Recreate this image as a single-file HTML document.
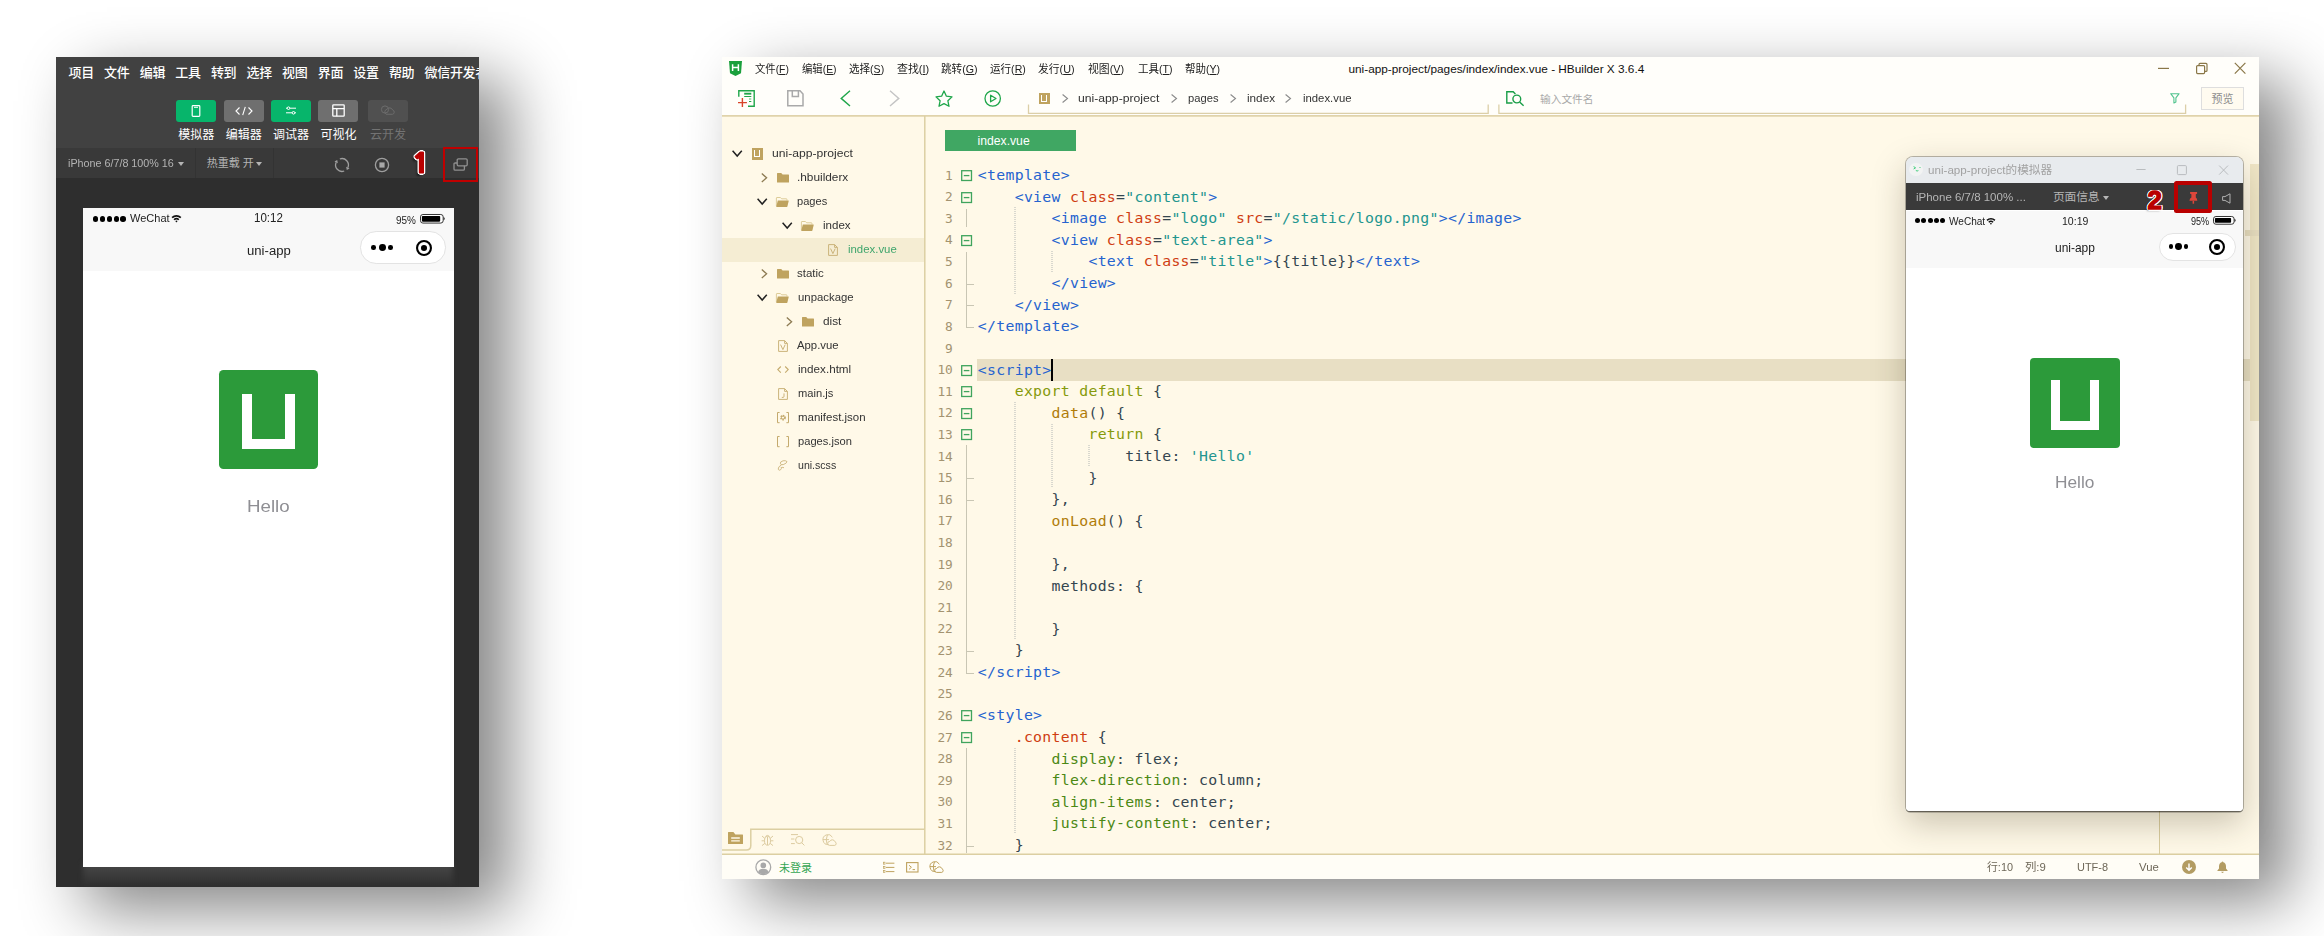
<!DOCTYPE html><html lang="zh-CN"><head><meta charset="utf-8"><title>uni-app</title><style>
*{box-sizing:border-box;margin:0;padding:0}
html,body{width:2324px;height:936px;overflow:hidden;background:#fff}
body{position:relative;font-family:"Liberation Sans","Noto Sans CJK SC",sans-serif;}
.a{position:absolute}
.t{position:absolute;white-space:pre;}
.win{position:absolute;box-shadow:30px 23px 60px 0 rgba(0,0,0,.48);}
svg{position:absolute;overflow:visible}
.code{position:absolute;white-space:pre;font-family:"DejaVu Sans Mono","Liberation Mono","Noto Sans CJK SC",monospace;font-size:14.8px;letter-spacing:0.31px;height:22px;line-height:22px;color:#34454f}
.ln{position:absolute;white-space:pre;font-family:"DejaVu Sans Mono","Liberation Mono","Noto Sans CJK SC",monospace;font-size:12.8px;height:22px;line-height:22px;color:#a39370;text-align:right;width:30px}
.tg{color:#2563cf} .at{color:#cf3d12} .st{color:#22958f} .kw{color:#869a0c} .fn{color:#b07c08} .pr{color:#4b8814} .sel{color:#cf3d12}
</style></head><body>
<div class="win" style="left:56px;top:57px;width:423px;height:830px;background:#2e2e2e;overflow:hidden;"></div>
<div class="a" style="left:56px;top:57px;width:423px;height:830px;overflow:hidden;">
<div class="a" style="left:0;top:0;width:423px;height:91px;background:#414141"></div>
<div class="a" style="left:0;top:91px;width:423px;height:30px;background:#393939"></div>
<div class="t " style="left:12.5px;top:6.5px;height:18px;line-height:18px;font-size:13px;color:#fff;font-weight:500;letter-spacing:-0.3px;">项目</div>
<div class="t " style="left:48.1px;top:6.5px;height:18px;line-height:18px;font-size:13px;color:#fff;font-weight:500;letter-spacing:-0.3px;">文件</div>
<div class="t " style="left:83.7px;top:6.5px;height:18px;line-height:18px;font-size:13px;color:#fff;font-weight:500;letter-spacing:-0.3px;">编辑</div>
<div class="t " style="left:119.3px;top:6.5px;height:18px;line-height:18px;font-size:13px;color:#fff;font-weight:500;letter-spacing:-0.3px;">工具</div>
<div class="t " style="left:154.9px;top:6.5px;height:18px;line-height:18px;font-size:13px;color:#fff;font-weight:500;letter-spacing:-0.3px;">转到</div>
<div class="t " style="left:190.5px;top:6.5px;height:18px;line-height:18px;font-size:13px;color:#fff;font-weight:500;letter-spacing:-0.3px;">选择</div>
<div class="t " style="left:226.1px;top:6.5px;height:18px;line-height:18px;font-size:13px;color:#fff;font-weight:500;letter-spacing:-0.3px;">视图</div>
<div class="t " style="left:261.7px;top:6.5px;height:18px;line-height:18px;font-size:13px;color:#fff;font-weight:500;letter-spacing:-0.3px;">界面</div>
<div class="t " style="left:297.3px;top:6.5px;height:18px;line-height:18px;font-size:13px;color:#fff;font-weight:500;letter-spacing:-0.3px;">设置</div>
<div class="t " style="left:332.9px;top:6.5px;height:18px;line-height:18px;font-size:13px;color:#fff;font-weight:500;letter-spacing:-0.3px;">帮助</div>
<div class="t " style="left:368.5px;top:6.5px;height:18px;line-height:18px;font-size:13px;color:#fff;font-weight:500;letter-spacing:-0.3px;">微信开发者工具</div>
<div class="a" style="left:120.2px;top:42.8px;width:40px;height:22px;border-radius:3px;background:#07b56b"></div>
<div class="t" style="left:110.2px;width:60px;text-align:center;top:69.6px;height:16px;line-height:16px;font-size:12px;color:#fff;">模拟器</div>
<div class="a" style="left:167.8px;top:42.8px;width:40px;height:22px;border-radius:3px;background:#6f6f6f"></div>
<div class="t" style="left:157.8px;width:60px;text-align:center;top:69.6px;height:16px;line-height:16px;font-size:12px;color:#fff;">编辑器</div>
<div class="a" style="left:215px;top:42.8px;width:40px;height:22px;border-radius:3px;background:#07b56b"></div>
<div class="t" style="left:205px;width:60px;text-align:center;top:69.6px;height:16px;line-height:16px;font-size:12px;color:#fff;">调试器</div>
<div class="a" style="left:262.4px;top:42.8px;width:40px;height:22px;border-radius:3px;background:#6f6f6f"></div>
<div class="t" style="left:252.39999999999998px;width:60px;text-align:center;top:69.6px;height:16px;line-height:16px;font-size:12px;color:#fff;">可视化</div>
<div class="a" style="left:312.1px;top:42.8px;width:40px;height:22px;border-radius:3px;background:#505050"></div>
<div class="t" style="left:302.1px;width:60px;text-align:center;top:69.6px;height:16px;line-height:16px;font-size:12px;color:#737373;">云开发</div>
<svg style="left:135.2px;top:47.8px" width="10" height="12" viewBox="0 0 10 12"><rect x="1.2" y="0.7" width="7.6" height="10.6" rx="0.8" fill="none" stroke="#fff" stroke-width="1.2"/><line x1="3" y1="2.3" x2="7" y2="2.3" stroke="#fff" stroke-width="1"/></svg>
<svg style="left:178.8px;top:48.8px" width="18" height="10" viewBox="0 0 18 10"><path d="M4.5 1.5 L1 5 L4.5 8.5 M13.5 1.5 L17 5 L13.5 8.5 M10.3 0.8 L7.7 9.2" fill="none" stroke="#fff" stroke-width="1.1"/></svg>
<svg style="left:230px;top:49.3px" width="10" height="9" viewBox="0 0 10 9"><path d="M0 2.2 H10 M0 6.8 H10" stroke="#fff" stroke-width="1"/><circle cx="2.5" cy="2.2" r="1.3" fill="#07b56b" stroke="#fff" stroke-width="1"/><circle cx="7.5" cy="6.8" r="1.3" fill="#07b56b" stroke="#fff" stroke-width="1"/></svg>
<svg style="left:275.9px;top:47.3px" width="13" height="13" viewBox="0 0 13 13"><rect x="0.8" y="0.8" width="11.4" height="11.4" rx="0.8" fill="none" stroke="#fff" stroke-width="1.3"/><path d="M0.8 4.6 H12.2 M4.8 4.6 V12.2" stroke="#fff" stroke-width="1.3"/></svg>
<svg style="left:324.1px;top:48.3px" width="16" height="11" viewBox="0 0 16 11"><circle cx="5" cy="4.5" r="3.6" fill="none" stroke="#6c6c6c" stroke-width="1"/><path d="M6 9.2 A2.8 2.8 0 0 1 7 4.2 A3.2 3.2 0 0 1 12.6 5 A2.2 2.2 0 0 1 12.4 9.3 Z" fill="none" stroke="#6c6c6c" stroke-width="1"/></svg>
<div class="t" style="left:11.9px;top:99.3px;height:14px;line-height:14px;font-size:11.7px;color:#b4b4b4;transform:scaleX(0.9197);transform-origin:0 50%;">iPhone 6/7/8 100% 16</div>
<div class="a" style="left:121.5px;top:105px;border-left:3px solid transparent;border-right:3px solid transparent;border-top:4px solid #b4b4b4"></div>
<div class="a" style="left:138.5px;top:91px;width:1px;height:30px;background:#333"></div>
<div class="a" style="left:216.5px;top:91px;width:1px;height:30px;background:#333"></div>
<div class="t " style="left:150.7px;top:99.3px;height:14px;line-height:14px;font-size:11px;color:#b4b4b4;">热重载 开</div>
<div class="a" style="left:199.5px;top:105px;border-left:3px solid transparent;border-right:3px solid transparent;border-top:4px solid #b4b4b4"></div>
<svg style="left:278.3px;top:99.9px" width="16" height="16" viewBox="0 0 16 16"><path d="M5.81 1.99 A6.4 6.4 0 0 1 13.75 10.81 M10.19 14.01 A6.4 6.4 0 0 1 2.25 5.19" fill="none" stroke="#9e9e9e" stroke-width="1.3"/><path d="M12.79 12.98 L15.58 11.38 L12.11 9.83 Z M3.21 3.02 L0.42 4.62 L3.89 6.17 Z" fill="#9e9e9e"/></svg>
<svg style="left:317.7px;top:99.9px" width="16" height="16" viewBox="0 0 16 16"><circle cx="8" cy="8" r="6.6" fill="none" stroke="#9e9e9e" stroke-width="1.3"/><rect x="5.4" y="5.4" width="5.2" height="5.2" fill="#a8a8a8"/></svg>
<svg style="left:397px;top:101px" width="15" height="13" viewBox="0 0 15 13"><rect x="4.2" y="0.8" width="10" height="7" rx="1.2" fill="none" stroke="#909090" stroke-width="1.3"/><path d="M4.2 5 H2.2 Q1 5 1 6.2 V11 Q1 12.2 2.2 12.2 H10.2 Q11.4 12.2 11.4 11 V7.8" fill="none" stroke="#909090" stroke-width="1.3"/></svg>
<div class="a" style="left:387px;top:89.7px;width:35.2px;height:35.4px;border:2px solid #c00000"></div>
<div class="t" style="left:355.8px;top:87.7px;height:38px;line-height:38px;font-size:27px;transform:scaleX(1.08);transform-origin:0 50%;font-weight:800;font-family:NanumGothic,'Liberation Sans',sans-serif;color:#b90000;-webkit-text-stroke:1.1px #b90000;text-shadow:1.60px 0.00px 0 #fff,-1.60px 0.00px 0 #fff,0.00px 1.60px 0 #fff,0.00px -1.60px 0 #fff,1.14px 1.14px 0 #fff,-1.14px 1.14px 0 #fff,1.14px -1.14px 0 #fff,-1.14px -1.14px 0 #fff,1.47px 0.61px 0 #fff,-1.47px 0.61px 0 #fff,1.47px -0.61px 0 #fff,-1.47px -0.61px 0 #fff,0.61px 1.47px 0 #fff,-0.61px 1.47px 0 #fff,0.61px -1.47px 0 #fff,-0.61px -1.47px 0 #fff,-2.5px 2.5px 2px rgba(0,0,0,.45);">1</div>
<div class="a" style="left:27px;top:806px;width:370px;height:24px;background:linear-gradient(#494949,#2e2e2e);filter:blur(2.5px)"></div>
<div class="a" style="left:27px;top:151px;width:370.5px;height:658.5px;background:#fff;overflow:hidden;border-radius:0"><div class="a" style="left:0;top:0;width:370.5px;height:63px;background:#f8f8f8"></div><div class="a" style="left:9.87px;top:8.04px;width:5.53px;height:5.53px;border-radius:50%;background:#000"></div><div class="a" style="left:16.76px;top:8.04px;width:5.53px;height:5.53px;border-radius:50%;background:#000"></div><div class="a" style="left:23.65px;top:8.04px;width:5.53px;height:5.53px;border-radius:50%;background:#000"></div><div class="a" style="left:30.54px;top:8.04px;width:5.53px;height:5.53px;border-radius:50%;background:#000"></div><div class="a" style="left:37.43px;top:8.04px;width:5.53px;height:5.53px;border-radius:50%;background:#000"></div><div class="t" style="left:46.8px;top:3.0px;height:14px;line-height:14px;font-size:11.65px;color:#222;transform:scaleX(0.9475);transform-origin:0 50%;">WeChat</div><svg style="left:88.0px;top:6.3px" width="10.9" height="8.9" viewBox="0 0 22 18"><path d="M1 6.2 A14.5 14.5 0 0 1 21 6.2 L18.6 8.8 A11 11 0 0 0 3.4 8.8 Z" fill="#111"/><path d="M5 10.4 A9 9 0 0 1 17 10.4 L14.7 12.9 A5.6 5.6 0 0 0 7.3 12.9 Z" fill="#111"/><path d="M8.6 14.2 A3.6 3.6 0 0 1 13.4 14.2 L11 17 Z" fill="#111"/></svg><div class="t" style="left:171.09px;top:1.9000000000000004px;height:16px;line-height:16px;font-size:12.83px;color:#222;transform:scaleX(0.9007);transform-origin:0 50%;">10:12</div><div class="t" style="left:312.9px;top:4.800000000000001px;height:14px;line-height:14px;font-size:11.45px;color:#222;transform:scaleX(0.8700);transform-origin:0 50%;">95%</div><svg style="left:337.34px;top:5.81px" width="26.69" height="9.57" viewBox="0 0 26.69 9.57"><rect x="0.5" y="0.5" width="22.69" height="8.57" rx="2.4" fill="#fff" stroke="#333" stroke-width="1"/><rect x="1.9" y="1.9" width="18.29" height="5.77" rx="0.8" fill="#000"/><path d="M23.69 3.09 Q25.79 4.79 23.69 6.49 Z" fill="#111"/></svg><div class="t" style="left:163.54px;top:32.8px;height:20px;line-height:20px;font-size:13.03px;color:#222;transform:scaleX(1.0082);transform-origin:0 50%;">uni-app</div><div class="a" style="left:277.4px;top:23.4px;width:85.3px;height:32.3px;border:1px solid #e3e3e3;border-radius:16.15px;background:#fff"></div><div class="a" style="left:288.3px;top:37.2px;width:4.6px;height:4.6px;border-radius:50%;background:#000"></div><div class="a" style="left:295.8px;top:36.1px;width:6.8px;height:6.8px;border-radius:50%;background:#000"></div><div class="a" style="left:305.2px;top:37.2px;width:4.6px;height:4.6px;border-radius:50%;background:#000"></div><svg style="left:332.38px;top:30.55px" width="18" height="18" viewBox="0 0 18 18"><circle cx="9" cy="9" r="6.95" fill="none" stroke="#000" stroke-width="2.1"/><circle cx="9" cy="9" r="3.05" fill="#000"/></svg><div class="a" style="left:136px;top:162px;width:99px;height:99px;border-radius:4.5px;background:#2c9a3a"></div><div class="a" style="left:158.9px;top:186.3px;width:53.1px;height:54.6px;border:10.0px solid #fff;border-top:none"></div><div class="t" style="left:164.1px;top:286.1px;height:24px;line-height:24px;font-size:17.4px;color:#8f8f94;transform:scaleX(1.0769);transform-origin:0 50%;">Hello</div></div>
</div>
<div class="win" style="left:722px;top:57px;width:1537px;height:822px;background:#fffae8;"></div>
<div class="a" id="hb" style="left:722px;top:57px;width:1537px;height:822px;overflow:hidden;background:#fff9e8">
<div class="a" style="left:0;top:0;width:1537px;height:58px;background:#fffefa"></div>
<svg style="left:0;top:0" width="1537" height="822"><path d="M0 58.8 H1537" stroke="#e0d3ab" stroke-width="1.8"/></svg>
<svg style="left:6.8px;top:4px" width="13" height="15" viewBox="0 0 13 15"><path d="M0 0 H13 L12 12.3 L6.5 15 L1 12.3 Z" fill="#1aa03c"/><path d="M3.6 3.2 V10 M9.4 3.2 V10 M3.6 6.6 H9.4" stroke="#fff" stroke-width="1.5" fill="none"/></svg>
<div class="t" style="left:33.4px;top:4.0px;height:16px;line-height:16px;font-size:11.2px;color:#222;transform:scaleX(0.9237);transform-origin:0 50%;">文件(<u>F</u>)</div>
<div class="t" style="left:79.8px;top:4.0px;height:16px;line-height:16px;font-size:11.2px;color:#222;transform:scaleX(0.9269);transform-origin:0 50%;">编辑(<u>E</u>)</div>
<div class="t" style="left:127.1px;top:4.0px;height:16px;line-height:16px;font-size:11.2px;color:#222;transform:scaleX(0.9429);transform-origin:0 50%;">选择(<u>S</u>)</div>
<div class="t" style="left:174.7px;top:4.0px;height:16px;line-height:16px;font-size:11.2px;color:#222;transform:scaleX(0.9766);transform-origin:0 50%;">查找(<u>I</u>)</div>
<div class="t" style="left:219.2px;top:4.0px;height:16px;line-height:16px;font-size:11.2px;color:#222;transform:scaleX(0.9489);transform-origin:0 50%;">跳转(<u>G</u>)</div>
<div class="t" style="left:268px;top:4.0px;height:16px;line-height:16px;font-size:11.2px;color:#222;transform:scaleX(0.9434);transform-origin:0 50%;">运行(<u>R</u>)</div>
<div class="t" style="left:316px;top:4.0px;height:16px;line-height:16px;font-size:11.2px;color:#222;transform:scaleX(0.9645);transform-origin:0 50%;">发行(<u>U</u>)</div>
<div class="t" style="left:365.8px;top:4.0px;height:16px;line-height:16px;font-size:11.2px;color:#222;transform:scaleX(0.9697);transform-origin:0 50%;">视图(<u>V</u>)</div>
<div class="t" style="left:415.5px;top:4.0px;height:16px;line-height:16px;font-size:11.2px;color:#222;transform:scaleX(0.9428);transform-origin:0 50%;">工具(<u>T</u>)</div>
<div class="t" style="left:463px;top:4.0px;height:16px;line-height:16px;font-size:11.2px;color:#222;transform:scaleX(0.9376);transform-origin:0 50%;">帮助(<u>Y</u>)</div>
<div class="t " style="left:626.5px;top:4.0px;height:16px;line-height:16px;font-size:11.8px;color:#111;">uni-app-project/pages/index/index.vue - HBuilder X 3.6.4</div>
<svg style="left:1436px;top:5px" width="90" height="13" viewBox="0 0 90 13"><path d="M0 6.4 H11" stroke="#8a7748" stroke-width="1.2"/><rect x="38.6" y="3.6" width="8" height="8" rx="1" fill="none" stroke="#8a7748" stroke-width="1.2"/><path d="M41 3.6 V2.4 Q41 1.4 42 1.4 H48 Q49 1.4 49 2.4 V8.4 Q49 9.4 48 9.4 H46.6" fill="none" stroke="#8a7748" stroke-width="1.2"/><path d="M76.8 0.8 L87.4 11.6 M87.4 0.8 L76.8 11.6" stroke="#8a7748" stroke-width="1.2"/></svg>
<svg style="left:16px;top:33px" width="18" height="18" viewBox="0 0 18 18"><path d="M0.8 6.8 V0.8 H16.2 V16.2 H10" fill="none" stroke="#1fa64a" stroke-width="1.4"/><path d="M6.2 3.7 H13.3" stroke="#1fa64a" stroke-width="1.9"/><path d="M6.2 6.5 H13.3 M11 11.5 H13.3" stroke="#1fa64a" stroke-width="1"/><path d="M11 9 H13.3" stroke="#7cc894" stroke-width="1.3"/><path d="M0 12.6 H8.9 M4.4 8.1 V16.9" stroke="#d8432a" stroke-width="1.4"/></svg>
<svg style="left:65.4px;top:33.2px" width="17" height="17" viewBox="0 0 17 17"><path d="M0.8 0.8 H13 L16 4 V15.8 H0.8 Z" fill="none" stroke="#a9a9a9" stroke-width="1.5"/><path d="M5.3 0.8 V6.4 H11.4 V0.8" fill="none" stroke="#a9a9a9" stroke-width="1.5"/></svg>
<svg style="left:118px;top:33px" width="11" height="17" viewBox="0 0 11 17"><path d="M10 0.8 L1.2 8.4 L10 16" fill="none" stroke="#1fa64a" stroke-width="1.4"/></svg>
<svg style="left:167px;top:33px" width="11" height="17" viewBox="0 0 11 17"><path d="M1 0.8 L9.8 8.4 L1 16" fill="none" stroke="#c4c4c4" stroke-width="1.4"/></svg>
<svg style="left:213px;top:32.5px" width="18" height="17" viewBox="0 0 18 17"><path d="M9 1 L11.4 6.2 L17 6.9 L12.9 10.8 L14 16.3 L9 13.6 L4 16.3 L5.1 10.8 L1 6.9 L6.6 6.2 Z" fill="none" stroke="#1fa64a" stroke-width="1.3" stroke-linejoin="round"/></svg>
<svg style="left:262px;top:33px" width="18" height="18" viewBox="0 0 18 18"><circle cx="8.7" cy="8.5" r="7.7" fill="none" stroke="#1fa64a" stroke-width="1.3"/><path d="M6.6 5.2 L12 8.5 L6.6 11.8 Z" fill="none" stroke="#1fa64a" stroke-width="1.3" stroke-linejoin="round"/></svg>
<svg style="left:0;top:0" width="1537" height="822"><path d="M306.5 47.4 V56.4 H766.2 V47.4 M776.9 47.4 V56.4 H1463.6 V47.4" fill="none" stroke="#dccfa8" stroke-width="1.3"/></svg>
<div class="a" style="left:316.5px;top:35.6px;width:11.8px;height:11.8px;background:#bfa35f"></div>
<div class="a" style="left:319.4px;top:38px;width:6px;height:6.6px;border:1.4px solid #fff;border-top:none"></div>
<svg style="left:339.7px;top:37.3px" width="6.5" height="9" viewBox="0 0 6.5 9"><path d="M0.6 0.5 L5.5 4.5 L0.6 8.5" fill="none" stroke="#8a8a8a" stroke-width="1.1"/></svg>
<svg style="left:448.7px;top:37.3px" width="6.5" height="9" viewBox="0 0 6.5 9"><path d="M0.6 0.5 L5.5 4.5 L0.6 8.5" fill="none" stroke="#8a8a8a" stroke-width="1.1"/></svg>
<svg style="left:507.6px;top:37.3px" width="6.5" height="9" viewBox="0 0 6.5 9"><path d="M0.6 0.5 L5.5 4.5 L0.6 8.5" fill="none" stroke="#8a8a8a" stroke-width="1.1"/></svg>
<svg style="left:563.2px;top:37.3px" width="6.5" height="9" viewBox="0 0 6.5 9"><path d="M0.6 0.5 L5.5 4.5 L0.6 8.5" fill="none" stroke="#8a8a8a" stroke-width="1.1"/></svg>
<div class="t" style="left:356.2px;top:33.3px;height:16px;line-height:16px;font-size:11.8px;color:#333;transform:scaleX(1.0329);transform-origin:0 50%;">uni-app-project</div>
<div class="t" style="left:465.5px;top:33.3px;height:16px;line-height:16px;font-size:11.8px;color:#333;transform:scaleX(0.9487);transform-origin:0 50%;">pages</div>
<div class="t" style="left:524.5px;top:33.3px;height:16px;line-height:16px;font-size:11.8px;color:#333;transform:scaleX(0.9926);transform-origin:0 50%;">index</div>
<div class="t" style="left:580.9px;top:33.3px;height:16px;line-height:16px;font-size:11.8px;color:#333;transform:scaleX(0.9601);transform-origin:0 50%;">index.vue</div>
<svg style="left:783.8px;top:34px" width="19" height="16" viewBox="0 0 19 16"><path d="M6.5 12 H0.8 V0.8 H7.2 L9.4 3" fill="none" stroke="#1a9e48" stroke-width="1.4"/><circle cx="10.8" cy="8" r="3.9" fill="none" stroke="#1a9e48" stroke-width="1.4"/><path d="M13.6 10.9 L17.6 14.8" stroke="#1a9e48" stroke-width="1.4"/></svg>
<div class="t " style="left:818px;top:33.5px;height:16px;line-height:16px;font-size:10.7px;color:#a9a9a9;">输入文件名</div>
<svg style="left:1448px;top:36.2px" width="10" height="11" viewBox="0 0 10 11"><path d="M0.7 0.7 H9.1 L5.9 4.9 V9 L3.9 10 V4.9 Z" fill="none" stroke="#52c48e" stroke-width="1.1" stroke-linejoin="round"/></svg>
<div class="a" style="left:1479.3px;top:29.5px;width:42.4px;height:23.4px;border:1px solid #dedede;background:#fffbf0"></div>
<div class="t " style="left:1489.6px;top:33.5px;height:16px;line-height:16px;font-size:11px;color:#8c8c8c;">预览</div>
<svg style="left:0;top:0" width="1537" height="822"><path d="M202.8 59 V797.3 M28.8 772.2 H202.8 M0 792.9 H24.3 Q28.8 792.9 28.8 788.4 V771.5" fill="none" stroke="#dccfa2" stroke-width="1.5"/></svg>
<div class="a" style="left:0;top:181px;width:202.3px;height:23.6px;background:#f5edd3"></div>
<div class="t" style="left:50px;top:88.1px;height:16px;line-height:16px;font-size:11.8px;color:#333;transform:scaleX(1.0291);transform-origin:0 50%;">uni-app-project</div>
<div class="t" style="left:75px;top:112.1px;height:16px;line-height:16px;font-size:11.8px;color:#333;transform:scaleX(1.0026);transform-origin:0 50%;">.hbuilderx</div>
<div class="t" style="left:75.4px;top:136.1px;height:16px;line-height:16px;font-size:11.8px;color:#333;transform:scaleX(0.9393);transform-origin:0 50%;">pages</div>
<div class="t" style="left:100.6px;top:160.1px;height:16px;line-height:16px;font-size:11.8px;color:#333;transform:scaleX(0.9784);transform-origin:0 50%;">index</div>
<div class="t" style="left:125.6px;top:184.1px;height:16px;line-height:16px;font-size:11.8px;color:#3fa56c;transform:scaleX(0.9661);transform-origin:0 50%;">index.vue</div>
<div class="t" style="left:75.4px;top:208.1px;height:16px;line-height:16px;font-size:11.8px;color:#333;transform:scaleX(0.9731);transform-origin:0 50%;">static</div>
<div class="t" style="left:75.6px;top:232.1px;height:16px;line-height:16px;font-size:11.8px;color:#333;transform:scaleX(0.9630);transform-origin:0 50%;">unpackage</div>
<div class="t" style="left:100.6px;top:256.1px;height:16px;line-height:16px;font-size:11.8px;color:#333;transform:scaleX(1.0020);transform-origin:0 50%;">dist</div>
<div class="t" style="left:75.2px;top:280.1px;height:16px;line-height:16px;font-size:11.8px;color:#333;transform:scaleX(0.9607);transform-origin:0 50%;">App.vue</div>
<div class="t" style="left:75.6px;top:304.1px;height:16px;line-height:16px;font-size:11.8px;color:#333;transform:scaleX(0.9892);transform-origin:0 50%;">index.html</div>
<div class="t" style="left:75.6px;top:328.1px;height:16px;line-height:16px;font-size:11.8px;color:#333;transform:scaleX(0.9444);transform-origin:0 50%;">main.js</div>
<div class="t" style="left:75.6px;top:352.1px;height:16px;line-height:16px;font-size:11.8px;color:#333;transform:scaleX(0.9724);transform-origin:0 50%;">manifest.json</div>
<div class="t" style="left:75.6px;top:376.1px;height:16px;line-height:16px;font-size:11.8px;color:#333;transform:scaleX(0.9444);transform-origin:0 50%;">pages.json</div>
<div class="t" style="left:75.6px;top:400.1px;height:16px;line-height:16px;font-size:11.8px;color:#333;transform:scaleX(0.8962);transform-origin:0 50%;">uni.scss</div>
<svg style="left:10px;top:93.1px" width="10.4" height="7" viewBox="0 0 10.4 7"><path d="M0.6 0.8 L5.2 6 L9.8 0.8" fill="none" stroke="#222" stroke-width="1.5"/></svg>
<div class="a" style="left:29.5px;top:91px;width:11.8px;height:11.6px;background:#bfa35f"></div>
<div class="a" style="left:32.4px;top:93.4px;width:6px;height:6.6px;border:1.4px solid #fff;border-top:none"></div>
<svg style="left:38.5px;top:115.8px" width="6.4" height="9.6" viewBox="0 0 6.4 9.6"><path d="M0.8 0.6 L5.6 4.8 L0.8 9" fill="none" stroke="#8d7b52" stroke-width="1.3"/></svg>
<svg style="left:54.9px;top:115.8px" width="12" height="9.6" viewBox="0 0 12 9.6"><path d="M0 0.4 Q0 0 0.4 0 H4.2 L5.6 1.5 H11.6 Q12 1.5 12 1.9 V9.2 Q12 9.6 11.6 9.6 H0.4 Q0 9.6 0 9.2 Z" fill="#bfa35f"/></svg>
<svg style="left:34.9px;top:141.1px" width="10.4" height="7" viewBox="0 0 10.4 7"><path d="M0.6 0.8 L5.2 6 L9.8 0.8" fill="none" stroke="#222" stroke-width="1.5"/></svg>
<svg style="left:53.8px;top:139.5px" width="12.8" height="10" viewBox="0 0 12.8 10"><path d="M0.4 9 V1 Q0.4 0.5 0.9 0.5 H4.4 L5.6 1.8 H10.4 Q10.9 1.8 10.9 2.3 V3.4" fill="none" stroke="#d9c68f" stroke-width="0.9"/><path d="M1.8 3.6 H12.4 Q12.9 3.6 12.7 4.1 L11.4 9.6 Q11.3 10 10.9 10 H0.6 Q0.1 10 0.3 9.5 Z" fill="#bfa35f"/></svg>
<svg style="left:60px;top:165.1px" width="10.4" height="7" viewBox="0 0 10.4 7"><path d="M0.6 0.8 L5.2 6 L9.8 0.8" fill="none" stroke="#222" stroke-width="1.5"/></svg>
<svg style="left:78.8px;top:163.5px" width="12.8" height="10" viewBox="0 0 12.8 10"><path d="M0.4 9 V1 Q0.4 0.5 0.9 0.5 H4.4 L5.6 1.8 H10.4 Q10.9 1.8 10.9 2.3 V3.4" fill="none" stroke="#d9c68f" stroke-width="0.9"/><path d="M1.8 3.6 H12.4 Q12.9 3.6 12.7 4.1 L11.4 9.6 Q11.3 10 10.9 10 H0.6 Q0.1 10 0.3 9.5 Z" fill="#bfa35f"/></svg>
<svg style="left:106px;top:186.8px" width="10" height="12" viewBox="0 0 10 12"><path d="M0.6 0.6 H6.6 L9.4 3.4 V11.4 H0.6 Z M6.6 0.6 V3.4 H9.4" fill="none" stroke="#cbb37a" stroke-width="1"/><path d="M2.6 4.6 L4.9 9.6 L7.2 4.6" fill="none" stroke="#cbb37a" stroke-width="1"/></svg>
<svg style="left:38.5px;top:211.8px" width="6.4" height="9.6" viewBox="0 0 6.4 9.6"><path d="M0.8 0.6 L5.6 4.8 L0.8 9" fill="none" stroke="#8d7b52" stroke-width="1.3"/></svg>
<svg style="left:54.9px;top:211.8px" width="12" height="9.6" viewBox="0 0 12 9.6"><path d="M0 0.4 Q0 0 0.4 0 H4.2 L5.6 1.5 H11.6 Q12 1.5 12 1.9 V9.2 Q12 9.6 11.6 9.6 H0.4 Q0 9.6 0 9.2 Z" fill="#bfa35f"/></svg>
<svg style="left:34.9px;top:237.1px" width="10.4" height="7" viewBox="0 0 10.4 7"><path d="M0.6 0.8 L5.2 6 L9.8 0.8" fill="none" stroke="#222" stroke-width="1.5"/></svg>
<svg style="left:53.8px;top:235.5px" width="12.8" height="10" viewBox="0 0 12.8 10"><path d="M0.4 9 V1 Q0.4 0.5 0.9 0.5 H4.4 L5.6 1.8 H10.4 Q10.9 1.8 10.9 2.3 V3.4" fill="none" stroke="#d9c68f" stroke-width="0.9"/><path d="M1.8 3.6 H12.4 Q12.9 3.6 12.7 4.1 L11.4 9.6 Q11.3 10 10.9 10 H0.6 Q0.1 10 0.3 9.5 Z" fill="#bfa35f"/></svg>
<svg style="left:63.7px;top:259.8px" width="6.4" height="9.6" viewBox="0 0 6.4 9.6"><path d="M0.8 0.6 L5.6 4.8 L0.8 9" fill="none" stroke="#8d7b52" stroke-width="1.3"/></svg>
<svg style="left:79.7px;top:259.8px" width="12" height="9.6" viewBox="0 0 12 9.6"><path d="M0 0.4 Q0 0 0.4 0 H4.2 L5.6 1.5 H11.6 Q12 1.5 12 1.9 V9.2 Q12 9.6 11.6 9.6 H0.4 Q0 9.6 0 9.2 Z" fill="#bfa35f"/></svg>
<svg style="left:55.8px;top:282.8px" width="10" height="12" viewBox="0 0 10 12"><path d="M0.6 0.6 H6.6 L9.4 3.4 V11.4 H0.6 Z M6.6 0.6 V3.4 H9.4" fill="none" stroke="#cbb37a" stroke-width="1"/><path d="M2.6 4.6 L4.9 9.6 L7.2 4.6" fill="none" stroke="#cbb37a" stroke-width="1"/></svg>
<svg style="left:54.9px;top:309.0px" width="12" height="7.2" viewBox="0 0 12 7.2"><path d="M3.8 0.5 L0.8 3.6 L3.8 6.7 M8.2 0.5 L11.2 3.6 L8.2 6.7" fill="none" stroke="#c4aa6c" stroke-width="1.1"/></svg>
<svg style="left:55.8px;top:330.8px" width="10" height="12" viewBox="0 0 10 12"><path d="M0.6 0.6 H6.6 L9.4 3.4 V11.4 H0.6 Z M6.6 0.6 V3.4 H9.4" fill="none" stroke="#cbb37a" stroke-width="1"/><path d="M6 5.4 V8.4 Q6 9.4 5 9.4 H3.8" fill="none" stroke="#cbb37a" stroke-width="1"/></svg>
<svg style="left:54.9px;top:355.0px" width="12" height="11.2" viewBox="0 0 12 11.2"><path d="M2.6 0.5 H0.5 V10.7 H2.6 M9.4 0.5 H11.5 V10.7 H9.4" fill="none" stroke="#c4aa6c" stroke-width="1"/><circle cx="6" cy="5.6" r="2.1" fill="none" stroke="#c4aa6c" stroke-width="1.6" stroke-dasharray="1.3 0.9"/><circle cx="6" cy="5.6" r="1.6" fill="none" stroke="#c4aa6c" stroke-width="1"/></svg>
<svg style="left:54.9px;top:379.0px" width="12" height="11.2" viewBox="0 0 12 11.2"><path d="M2.6 0.5 H0.5 V10.7 H2.6 M9.4 0.5 H11.5 V10.7 H9.4" fill="none" stroke="#c4aa6c" stroke-width="1"/></svg>
<svg style="left:55px;top:403.2px" width="11" height="11" viewBox="0 0 11 11"><path d="M10 1.6 Q8.6 0.2 6 0.8 Q2.6 1.8 3.4 3.8 Q4 5 6.2 4.6 Q9.6 3.6 10 1.6 M4.6 4.6 Q2.2 6 1.4 8 Q0.8 10 2.4 10.2 Q4 10 4.4 8.4 Q4.6 7.4 3.6 6.8 M4.4 7.6 Q6 7 7 7.8" fill="none" stroke="#cbb37a" stroke-width="0.9"/></svg>
<svg style="left:6.4px;top:775px" width="15" height="12" viewBox="0 0 15 12"><path d="M0 0.5 Q0 0 0.5 0 H5.4 L7.4 2.4 H14.5 Q15 2.4 15 2.9 V11.5 Q15 12 14.5 12 H0.5 Q0 12 0 11.5 Z" fill="#bfa35f"/><path d="M3.2 6 H11.8 M3.2 8.9 H11.8" stroke="#fff9e8" stroke-width="1.3"/></svg>
<svg style="left:38.5px;top:776.5px" width="13" height="12" viewBox="0 0 13 12"><ellipse cx="6.5" cy="6.8" rx="3" ry="4.4" fill="none" stroke="#dccb9f" stroke-width="1"/><path d="M6.5 3 V11 M4.6 2.8 A2 2 0 0 1 8.4 2.8 M0.6 6.8 H3.4 M9.6 6.8 H12.4 M1 2 L3.8 4.4 M12 2 L9.2 4.4 M1 11.6 L3.8 9.4 M12 11.6 L9.2 9.4" fill="none" stroke="#dccb9f" stroke-width="1"/></svg>
<svg style="left:69.2px;top:777px" width="14" height="12" viewBox="0 0 14 12"><path d="M0 0.6 H7 M0 5 H3.4 M0 9.6 H3.8" stroke="#dccb9f" stroke-width="1"/><circle cx="8.2" cy="6" r="3.6" fill="none" stroke="#dccb9f" stroke-width="1"/><path d="M10.8 8.8 L13.4 11.4" stroke="#dccb9f" stroke-width="1"/></svg>
<svg style="left:100px;top:776.5px" width="15" height="12" viewBox="0 0 15 12"><path d="M6.4 10.6 A5 5 0 1 1 10.4 3.2" fill="none" stroke="#dccb9f" stroke-width="1"/><path d="M0.8 5.6 H7 M5.4 0.8 Q3.4 5.6 5 10.2" fill="none" stroke="#dccb9f" stroke-width="1"/><path d="M7.6 11.4 A2 2 0 0 1 7.8 7.4 A2.8 2.8 0 0 1 13 7.8 A1.9 1.9 0 0 1 12.8 11.4 Z" fill="none" stroke="#dccb9f" stroke-width="1"/></svg>
<div class="a" style="left:0;top:797px;width:1537px;height:25px;background:#fffdf6;"></div><svg style="left:0;top:0" width="1537" height="822"><path d="M0 797.3 H1537" stroke="#dccfa2" stroke-width="1.5"/></svg>
<svg style="left:33px;top:801.6px" width="17" height="17" viewBox="0 0 17 17"><defs><clipPath id="cpa"><circle cx="8.3" cy="8.3" r="7"/></clipPath></defs><circle cx="8.3" cy="8.3" r="7.4" fill="none" stroke="#a9a9a9" stroke-width="1.3"/><g clip-path="url(#cpa)" fill="#a9a9a9"><circle cx="8.3" cy="6.4" r="2.8"/><path d="M2.6 16 Q2.8 10.6 6.4 10 H10.2 Q13.8 10.6 14 16 Z"/></g></svg>
<div class="t " style="left:57px;top:802.9px;height:16px;line-height:16px;font-size:11px;color:#35a653;">未登录</div>
<svg style="left:160.8px;top:804.8px" width="12" height="11" viewBox="0 0 12 11"><path d="M3 1.2 H11.4 M3 5.4 H11.4 M3 9.6 H11.4" stroke="#bfa35f" stroke-width="1"/><rect x="0.4" y="0.2" width="1.6" height="2" fill="none" stroke="#bfa35f" stroke-width="0.7"/><rect x="0.4" y="4.4" width="1.6" height="2" fill="none" stroke="#bfa35f" stroke-width="0.7"/><rect x="0.4" y="8.6" width="1.6" height="2" fill="none" stroke="#bfa35f" stroke-width="0.7"/></svg>
<svg style="left:184px;top:804.8px" width="13" height="11" viewBox="0 0 13 11"><rect x="0.6" y="0.6" width="11.4" height="9.4" fill="none" stroke="#bfa35f" stroke-width="1.1"/><path d="M3 3.2 L5.4 5.3 L3 7.4 M6.6 7.6 H9" fill="none" stroke="#bfa35f" stroke-width="1"/></svg>
<svg style="left:207px;top:804.2px" width="15" height="12" viewBox="0 0 15 12"><path d="M6.4 10.6 A5 5 0 1 1 10.4 3.2" fill="none" stroke="#bfa35f" stroke-width="1"/><path d="M0.8 5.6 H7 M5.4 0.8 Q3.4 5.6 5 10.2" fill="none" stroke="#bfa35f" stroke-width="1"/><path d="M7.6 11.4 A2 2 0 0 1 7.8 7.4 A2.8 2.8 0 0 1 13 7.8 A1.9 1.9 0 0 1 12.8 11.4 Z" fill="none" stroke="#bfa35f" stroke-width="1"/></svg>
<div class="t" style="left:1265px;top:802.2px;height:16px;line-height:16px;font-size:11.6px;color:#6e6758;transform:scaleX(0.9378);transform-origin:0 50%;">行:10</div>
<div class="t" style="left:1302.7px;top:802.2px;height:16px;line-height:16px;font-size:11.6px;color:#6e6758;transform:scaleX(0.9777);transform-origin:0 50%;">列:9</div>
<div class="t" style="left:1355px;top:802.2px;height:16px;line-height:16px;font-size:11.6px;color:#6e6758;transform:scaleX(0.9433);transform-origin:0 50%;">UTF-8</div>
<div class="t" style="left:1417.4px;top:802.2px;height:16px;line-height:16px;font-size:11.6px;color:#6e6758;transform:scaleX(0.9787);transform-origin:0 50%;">Vue</div>
<svg style="left:1459.6px;top:803px" width="14" height="14" viewBox="0 0 14 14"><circle cx="7" cy="7" r="7" fill="#b39c62"/><path d="M7 3.4 V10 M4.2 7.4 L7 10.2 L9.8 7.4" fill="none" stroke="#fff" stroke-width="1.4"/></svg>
<svg style="left:1495px;top:804px" width="11" height="12" viewBox="0 0 11 12"><path d="M5.5 0.4 Q6.3 0.4 6.3 1.3 Q9 2.2 9 5.4 V7.6 L10.6 9.4 V10 H0.4 V9.4 L2 7.6 V5.4 Q2 2.2 4.7 1.3 Q4.7 0.4 5.5 0.4 Z" fill="#b39c62"/><path d="M4.2 10.8 H6.8 Q6.6 11.9 5.5 11.9 Q4.4 11.9 4.2 10.8 Z" fill="#b39c62"/></svg>
<div class="a" style="left:222.6px;top:72.8px;width:131px;height:21.4px;background:#40a763"></div>
<div class="t" style="left:222.6px;top:75.5px;width:118px;text-align:center;height:16px;line-height:16px;font-size:12.2px;color:#fff">index.vue</div>
<div class="a" style="left:1528px;top:107.3px;width:9px;height:689.3px;background:transparent"></div>
<div class="a" style="left:1528px;top:107.3px;width:9px;height:256.7px;background:#f1e7c7"></div>
<div class="a" style="left:1523px;top:172.5px;width:14px;height:6.5px;background:#e9dfc2"></div>
<div class="a" style="left:1436.6px;top:106px;width:1px;height:690.6px;background:#d9cc9f"></div>
<div class="a" style="left:255px;top:302.2px;width:1273px;height:21.5px;background:#e8dfc4"></div>
<div class="ln" style="left:200.8px;top:107.60px">1</div>
<div class="code" style="left:255.8px;top:107.00px"><span class="tg">&lt;template&gt;</span></div>
<div class="ln" style="left:200.8px;top:129.21px">2</div>
<div class="code" style="left:255.8px;top:128.61px">    <span class="tg">&lt;view</span> <span class="at">class</span>=<span class="st">"content"</span><span class="tg">&gt;</span></div>
<div class="ln" style="left:200.8px;top:150.83px">3</div>
<div class="code" style="left:255.8px;top:150.23px">        <span class="tg">&lt;image</span> <span class="at">class</span>=<span class="st">"logo"</span> <span class="at">src</span>=<span class="st">"/static/logo.png"</span><span class="tg">&gt;&lt;/image&gt;</span></div>
<div class="ln" style="left:200.8px;top:172.44px">4</div>
<div class="code" style="left:255.8px;top:171.84px">        <span class="tg">&lt;view</span> <span class="at">class</span>=<span class="st">"text-area"</span><span class="tg">&gt;</span></div>
<div class="ln" style="left:200.8px;top:194.05px">5</div>
<div class="code" style="left:255.8px;top:193.45px">            <span class="tg">&lt;text</span> <span class="at">class</span>=<span class="st">"title"</span><span class="tg">&gt;</span>{{title}}<span class="tg">&lt;/text&gt;</span></div>
<div class="ln" style="left:200.8px;top:215.67px">6</div>
<div class="code" style="left:255.8px;top:215.06px">        <span class="tg">&lt;/view&gt;</span></div>
<div class="ln" style="left:200.8px;top:237.28px">7</div>
<div class="code" style="left:255.8px;top:236.68px">    <span class="tg">&lt;/view&gt;</span></div>
<div class="ln" style="left:200.8px;top:258.89px">8</div>
<div class="code" style="left:255.8px;top:258.29px"><span class="tg">&lt;/template&gt;</span></div>
<div class="ln" style="left:200.8px;top:280.50px">9</div>
<div class="ln" style="left:200.8px;top:302.12px">10</div>
<div class="code" style="left:255.8px;top:301.52px"><span class="tg">&lt;script&gt;</span></div>
<div class="ln" style="left:200.8px;top:323.73px">11</div>
<div class="code" style="left:255.8px;top:323.13px">    <span class="kw">export default</span> {</div>
<div class="ln" style="left:200.8px;top:345.34px">12</div>
<div class="code" style="left:255.8px;top:344.74px">        <span class="fn">data</span>() {</div>
<div class="ln" style="left:200.8px;top:366.96px">13</div>
<div class="code" style="left:255.8px;top:366.36px">            <span class="kw">return</span> {</div>
<div class="ln" style="left:200.8px;top:388.57px">14</div>
<div class="code" style="left:255.8px;top:387.97px">                title: <span class="st">'Hello'</span></div>
<div class="ln" style="left:200.8px;top:410.18px">15</div>
<div class="code" style="left:255.8px;top:409.58px">            }</div>
<div class="ln" style="left:200.8px;top:431.80px">16</div>
<div class="code" style="left:255.8px;top:431.19px">        },</div>
<div class="ln" style="left:200.8px;top:453.41px">17</div>
<div class="code" style="left:255.8px;top:452.81px">        <span class="fn">onLoad</span>() {</div>
<div class="ln" style="left:200.8px;top:475.02px">18</div>
<div class="ln" style="left:200.8px;top:496.63px">19</div>
<div class="code" style="left:255.8px;top:496.03px">        },</div>
<div class="ln" style="left:200.8px;top:518.25px">20</div>
<div class="code" style="left:255.8px;top:517.65px">        methods: {</div>
<div class="ln" style="left:200.8px;top:539.86px">21</div>
<div class="ln" style="left:200.8px;top:561.47px">22</div>
<div class="code" style="left:255.8px;top:560.87px">        }</div>
<div class="ln" style="left:200.8px;top:583.09px">23</div>
<div class="code" style="left:255.8px;top:582.49px">    }</div>
<div class="ln" style="left:200.8px;top:604.70px">24</div>
<div class="code" style="left:255.8px;top:604.10px"><span class="tg">&lt;/script&gt;</span></div>
<div class="ln" style="left:200.8px;top:626.31px">25</div>
<div class="ln" style="left:200.8px;top:647.93px">26</div>
<div class="code" style="left:255.8px;top:647.33px"><span class="tg">&lt;style&gt;</span></div>
<div class="ln" style="left:200.8px;top:669.54px">27</div>
<div class="code" style="left:255.8px;top:668.94px">    <span class="sel">.content</span> {</div>
<div class="ln" style="left:200.8px;top:691.15px">28</div>
<div class="code" style="left:255.8px;top:690.55px">        <span class="pr">display</span>: flex;</div>
<div class="ln" style="left:200.8px;top:712.76px">29</div>
<div class="code" style="left:255.8px;top:712.16px">        <span class="pr">flex-direction</span>: column;</div>
<div class="ln" style="left:200.8px;top:734.38px">30</div>
<div class="code" style="left:255.8px;top:733.78px">        <span class="pr">align-items</span>: center;</div>
<div class="ln" style="left:200.8px;top:755.99px">31</div>
<div class="code" style="left:255.8px;top:755.39px">        <span class="pr">justify-content</span>: center;</div>
<div class="ln" style="left:200.8px;top:777.60px">32</div>
<div class="code" style="left:255.8px;top:777.00px">    }</div>
<svg style="left:239.2px;top:113.00px" width="11.2" height="11.2" viewBox="0 0 11.2 11.2"><rect x="0.7" y="0.7" width="9.8" height="9.8" fill="none" stroke="#3fa45d" stroke-width="1.3"/><path d="M2.8 5.6 H8.4" stroke="#3fa45d" stroke-width="1.3"/></svg>
<svg style="left:239.2px;top:134.61px" width="11.2" height="11.2" viewBox="0 0 11.2 11.2"><rect x="0.7" y="0.7" width="9.8" height="9.8" fill="none" stroke="#3fa45d" stroke-width="1.3"/><path d="M2.8 5.6 H8.4" stroke="#3fa45d" stroke-width="1.3"/></svg>
<svg style="left:239.2px;top:177.84px" width="11.2" height="11.2" viewBox="0 0 11.2 11.2"><rect x="0.7" y="0.7" width="9.8" height="9.8" fill="none" stroke="#3fa45d" stroke-width="1.3"/><path d="M2.8 5.6 H8.4" stroke="#3fa45d" stroke-width="1.3"/></svg>
<svg style="left:239.2px;top:307.52px" width="11.2" height="11.2" viewBox="0 0 11.2 11.2"><rect x="0.7" y="0.7" width="9.8" height="9.8" fill="none" stroke="#3fa45d" stroke-width="1.3"/><path d="M2.8 5.6 H8.4" stroke="#3fa45d" stroke-width="1.3"/></svg>
<svg style="left:239.2px;top:329.13px" width="11.2" height="11.2" viewBox="0 0 11.2 11.2"><rect x="0.7" y="0.7" width="9.8" height="9.8" fill="none" stroke="#3fa45d" stroke-width="1.3"/><path d="M2.8 5.6 H8.4" stroke="#3fa45d" stroke-width="1.3"/></svg>
<svg style="left:239.2px;top:350.74px" width="11.2" height="11.2" viewBox="0 0 11.2 11.2"><rect x="0.7" y="0.7" width="9.8" height="9.8" fill="none" stroke="#3fa45d" stroke-width="1.3"/><path d="M2.8 5.6 H8.4" stroke="#3fa45d" stroke-width="1.3"/></svg>
<svg style="left:239.2px;top:372.36px" width="11.2" height="11.2" viewBox="0 0 11.2 11.2"><rect x="0.7" y="0.7" width="9.8" height="9.8" fill="none" stroke="#3fa45d" stroke-width="1.3"/><path d="M2.8 5.6 H8.4" stroke="#3fa45d" stroke-width="1.3"/></svg>
<svg style="left:239.2px;top:653.33px" width="11.2" height="11.2" viewBox="0 0 11.2 11.2"><rect x="0.7" y="0.7" width="9.8" height="9.8" fill="none" stroke="#3fa45d" stroke-width="1.3"/><path d="M2.8 5.6 H8.4" stroke="#3fa45d" stroke-width="1.3"/></svg>
<svg style="left:239.2px;top:674.94px" width="11.2" height="11.2" viewBox="0 0 11.2 11.2"><rect x="0.7" y="0.7" width="9.8" height="9.8" fill="none" stroke="#3fa45d" stroke-width="1.3"/><path d="M2.8 5.6 H8.4" stroke="#3fa45d" stroke-width="1.3"/></svg>
<div class="a" style="left:244.2px;top:152.23px;width:1.1px;height:18.00px;background:#c9c6b4"></div>
<div class="a" style="left:244.2px;top:195.45px;width:1.1px;height:63.03px;background:#c9c6b4"></div>
<div class="a" style="left:244.2px;top:258.49px;width:1.1px;height:11.40px;background:#c9c6b4"></div>
<div class="a" style="left:244.2px;top:226.67px;width:8px;height:1.1px;background:#c9c6b4"></div>
<div class="a" style="left:244.2px;top:248.28px;width:8px;height:1.1px;background:#c9c6b4"></div>
<div class="a" style="left:244.2px;top:269.89px;width:8px;height:1.1px;background:#c9c6b4"></div>
<div class="a" style="left:244.2px;top:388.17px;width:1.1px;height:216.12px;background:#c9c6b4"></div>
<div class="a" style="left:244.2px;top:604.30px;width:1.1px;height:11.40px;background:#c9c6b4"></div>
<div class="a" style="left:244.2px;top:421.18px;width:8px;height:1.1px;background:#c9c6b4"></div>
<div class="a" style="left:244.2px;top:442.80px;width:8px;height:1.1px;background:#c9c6b4"></div>
<div class="a" style="left:244.2px;top:594.09px;width:8px;height:1.1px;background:#c9c6b4"></div>
<div class="a" style="left:244.2px;top:615.70px;width:8px;height:1.1px;background:#c9c6b4"></div>
<div class="a" style="left:244.2px;top:690.75px;width:1.1px;height:105.45px;background:#c9c6b4"></div>
<div class="a" style="left:244.2px;top:788.60px;width:8px;height:1.1px;background:#c9c6b4"></div>
<div class="a" style="left:292.2px;top:150.43px;width:2px;height:86.44px;background:repeating-linear-gradient(to bottom,#d2d2ca 0,#d2d2ca 1px,transparent 1px,transparent 2px);opacity:.85"></div>
<div class="a" style="left:329.2px;top:193.65px;width:2px;height:21.60px;background:repeating-linear-gradient(to bottom,#d2d2ca 0,#d2d2ca 1px,transparent 1px,transparent 2px);opacity:.85"></div>
<div class="a" style="left:292.2px;top:344.94px;width:2px;height:237.73px;background:repeating-linear-gradient(to bottom,#d2d2ca 0,#d2d2ca 1px,transparent 1px,transparent 2px);opacity:.85"></div>
<div class="a" style="left:329.2px;top:366.56px;width:2px;height:64.83px;background:repeating-linear-gradient(to bottom,#d2d2ca 0,#d2d2ca 1px,transparent 1px,transparent 2px);opacity:.85"></div>
<div class="a" style="left:366.4px;top:388.17px;width:2px;height:21.60px;background:repeating-linear-gradient(to bottom,#d2d2ca 0,#d2d2ca 1px,transparent 1px,transparent 2px);opacity:.85"></div>
<div class="a" style="left:292.2px;top:690.75px;width:2px;height:86.44px;background:repeating-linear-gradient(to bottom,#d2d2ca 0,#d2d2ca 1px,transparent 1px,transparent 2px);opacity:.85"></div>
<div class="a" style="left:328.6px;top:302.2px;width:2.1px;height:21.5px;background:#000"></div>
</div>
<div class="a" style="left:1906px;top:157.2px;width:337.2px;height:654.3px;border-radius:7px 7px 4px 4px;box-shadow:0 12px 34px rgba(40,30,0,.25),0 0 0 1px rgba(0,0,0,.27),0 1.5px 0 0 rgba(0,0,0,.4);background:#fff;overflow:hidden">
<div class="a" style="left:0;top:0;width:337.2px;height:26px;background:#e8ebee"></div>
<div class="a" style="left:0;top:25.4px;width:337.2px;height:27.8px;background:#3a3a3a"></div>
<div class="a" style="left:3.4px;top:5.8px;width:13.4px;height:13.4px;border-radius:50%;background:#f2f3f3"></div>
<svg style="left:7px;top:8.8px" width="8" height="6" viewBox="0 0 8 6"><path d="M0.6 0.6 L2.6 1.8 L0.6 3 M6.6 1 L7.4 2 M2.8 4.4 Q4 5.6 5.4 4.6" fill="none" stroke="#3fcf7c" stroke-width="1"/></svg>
<div class="t" style="left:22.2px;top:5.300000000000001px;height:16px;line-height:16px;font-size:11.6px;color:#a2a2a2;transform:scaleX(1.0034);transform-origin:0 50%;">uni-app-project的模拟器</div>
<svg style="left:230px;top:7.8px" width="93" height="10" viewBox="0 0 93 10"><path d="M0.4 4.5 H9.6" stroke="#b9bcbf" stroke-width="1"/><rect x="41.4" y="0.6" width="9" height="9" rx="1" fill="none" stroke="#b9bcbf" stroke-width="1"/><path d="M83.2 0.6 L92 9.6 M92 0.6 L83.2 9.6" stroke="#b9bcbf" stroke-width="1"/></svg>
<div class="t" style="left:10.2px;top:31.5px;height:16px;line-height:16px;font-size:11.7px;color:#b6b6b6;transform:scaleX(0.9832);transform-origin:0 50%;">iPhone 6/7/8 100% ...</div>
<div class="t " style="left:147px;top:31.5px;height:16px;line-height:16px;font-size:11.8px;color:#b6b6b6;letter-spacing:-0.2px">页面信息</div>
<div class="a" style="left:196.6px;top:38.4px;border-left:3px solid transparent;border-right:3px solid transparent;border-top:4px solid #b6b6b6"></div>
<svg style="left:315.6px;top:35.6px" width="9" height="11" viewBox="0 0 9 11"><path d="M0.6 3.6 H3 L8 0.8 V10.2 L3 7.4 H0.6 Z" fill="none" stroke="#b0b0b0" stroke-width="1" stroke-linejoin="round"/></svg>
<svg style="left:282.8px;top:35.0px" width="9" height="12" viewBox="0 0 9 12"><path d="M1.1 0.1 H8.1 V1.7 L6.8 2.3 V5.5 Q8.3 6.6 8.3 8.8 H0.5 Q0.5 6.6 2.4 5.5 V2.3 L1.1 1.7 Z" fill="#dc463a"/><rect x="3.6" y="8.8" width="1.5" height="2.9" fill="#dc463a"/></svg>
</div>
<div class="a" style="left:1906px;top:210.6px;width:337.2px;height:600.9px;background:#fff;overflow:hidden;border-radius:0 0 4px 4px"><div class="a" style="left:0;top:0;width:337.2px;height:57.4px;background:#f8f8f8"></div><div class="a" style="left:9.00px;top:7.78px;width:5.04px;height:5.04px;border-radius:50%;background:#000"></div><div class="a" style="left:15.28px;top:7.78px;width:5.04px;height:5.04px;border-radius:50%;background:#000"></div><div class="a" style="left:21.56px;top:7.78px;width:5.04px;height:5.04px;border-radius:50%;background:#000"></div><div class="a" style="left:27.85px;top:7.78px;width:5.04px;height:5.04px;border-radius:50%;background:#000"></div><div class="a" style="left:34.13px;top:7.78px;width:5.04px;height:5.04px;border-radius:50%;background:#000"></div><div class="t" style="left:42.7px;top:3.5px;height:14px;line-height:14px;font-size:10.62px;color:#222;transform:scaleX(0.9478);transform-origin:0 50%;">WeChat</div><svg style="left:80.3px;top:6.8px" width="9.9" height="8.1" viewBox="0 0 22 18"><path d="M1 6.2 A14.5 14.5 0 0 1 21 6.2 L18.6 8.8 A11 11 0 0 0 3.4 8.8 Z" fill="#111"/><path d="M5 10.4 A9 9 0 0 1 17 10.4 L14.7 12.9 A5.6 5.6 0 0 0 7.3 12.9 Z" fill="#111"/><path d="M8.6 14.2 A3.6 3.6 0 0 1 13.4 14.2 L11 17 Z" fill="#111"/></svg><div class="t" style="left:155.72px;top:2.4000000000000004px;height:16px;line-height:16px;font-size:11.7px;color:#222;transform:scaleX(0.9007);transform-origin:0 50%;">10:19</div><div class="t" style="left:284.6px;top:4.700000000000001px;height:14px;line-height:14px;font-size:10.44px;color:#222;transform:scaleX(0.8701);transform-origin:0 50%;">95%</div><svg style="left:306.96px;top:5.74px" width="24.60" height="8.73" viewBox="0 0 24.60 8.73"><rect x="0.5" y="0.5" width="20.60" height="7.73" rx="2.4" fill="#fff" stroke="#333" stroke-width="1"/><rect x="1.9" y="1.9" width="16.20" height="4.93" rx="0.8" fill="#000"/><path d="M21.60 2.67 Q23.70 4.37 21.60 6.07 Z" fill="#111"/></svg><div class="t" style="left:148.82px;top:27.5px;height:20px;line-height:20px;font-size:11.88px;color:#222;transform:scaleX(1.0083);transform-origin:0 50%;">uni-app</div><div class="a" style="left:252.9px;top:22px;width:77.1px;height:28.2px;border:1px solid #e3e3e3;border-radius:14.1px;background:#fff"></div><div class="a" style="left:262.6px;top:33.8px;width:4.6px;height:4.6px;border-radius:50%;background:#000"></div><div class="a" style="left:269.2px;top:32.7px;width:6.8px;height:6.8px;border-radius:50%;background:#000"></div><div class="a" style="left:277.8px;top:33.8px;width:4.6px;height:4.6px;border-radius:50%;background:#000"></div><svg style="left:301.73px;top:27.10px" width="18" height="18" viewBox="0 0 18 18"><circle cx="9" cy="9" r="6.95" fill="none" stroke="#000" stroke-width="2.1"/><circle cx="9" cy="9" r="3.05" fill="#000"/></svg><div class="a" style="left:123.7px;top:147.6px;width:90.2px;height:90.2px;border-radius:4.1px;background:#2c9a3a"></div><div class="a" style="left:144.5px;top:169.7px;width:48.3px;height:49.8px;border:9.1px solid #fff;border-top:none"></div><div class="t" style="left:149.1px;top:260.8px;height:24px;line-height:24px;font-size:15.7px;color:#8f8f94;transform:scaleX(1.1012);transform-origin:0 50%;">Hello</div></div>
<div class="a" style="left:2174px;top:181.2px;width:38.2px;height:32.2px;border:4px solid #b90000;border-radius:2.5px"></div>
<div class="t" style="left:2147.6px;top:183.2px;height:34px;line-height:34px;font-size:25.9px;font-weight:bold;color:#b90000;-webkit-text-stroke:1.3px #b90000;text-shadow:1.50px 0.00px 0 #fff,-1.50px 0.00px 0 #fff,0.00px 1.50px 0 #fff,0.00px -1.50px 0 #fff,1.06px 1.06px 0 #fff,-1.06px 1.06px 0 #fff,1.06px -1.06px 0 #fff,-1.06px -1.06px 0 #fff,1.38px 0.57px 0 #fff,-1.38px 0.57px 0 #fff,1.38px -0.57px 0 #fff,-1.38px -0.57px 0 #fff,0.57px 1.38px 0 #fff,-0.57px 1.38px 0 #fff,0.57px -1.38px 0 #fff,-0.57px -1.38px 0 #fff,-1.5px 2px 2px rgba(0,0,0,.35);">2</div>
</body></html>
